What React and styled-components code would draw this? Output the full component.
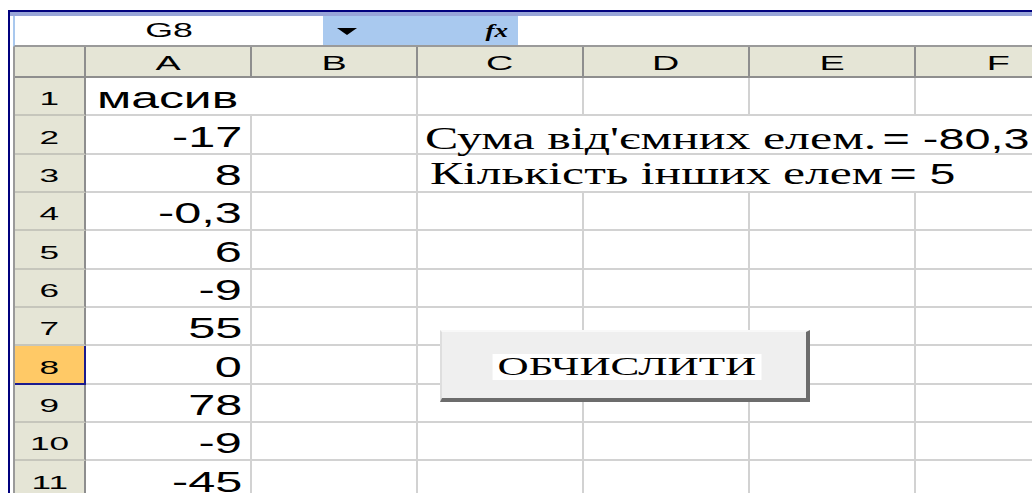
import React from 'react';
import styled, { createGlobalStyle } from 'styled-components';

const GlobalStyle = createGlobalStyle`
  html, body {
    margin: 0;
    padding: 0;
    background: #ffffff;
  }
  body {
    overflow: hidden;
  }
`;

const SANS = '"Liberation Sans", Arial, sans-serif';
const SERIF = '"Liberation Serif", "Times New Roman", serif';

const Page = styled.div`
  width: 1032px;
  height: 493px;
  overflow: hidden;
  box-sizing: border-box;
  padding: 10px 0 0 8px;
  background: #ffffff;
  font-family: ${SANS};
  color: #000000;
`;

const Window = styled.div`
  height: 100%;
  border-top: 2px solid #00007e;
  border-left: 2px solid #00007e;
`;

const TitleEdge = styled.div`
  height: 4px;
  background: #98a5d8;
`;

const Body = styled.div`
  padding-left: 3px;
  background: #ffffff;
`;

/* wide text: the sheet is drawn with a horizontally stretched type */
const Wide = styled.span`
  display: inline-block;
  white-space: nowrap;
  transform: scaleX(${(p) => p.$sx || 1.6});
  transform-origin: ${(p) => p.$origin || 'center'};
`;

const FormulaBar = styled.div`
  display: flex;
  height: 31px;
  box-sizing: border-box;
  border-left: 2px solid #a9c8ee;
  border-bottom: 2px solid #9a9a9a;
`;

const NameBox = styled.div`
  width: 308px;
  box-sizing: border-box;
  display: flex;
  justify-content: center;
  align-items: flex-end;
  padding-bottom: 5px;
  font-size: 21px;
  line-height: 21px;
`;

const FxStrip = styled.div`
  width: 195px;
  box-sizing: border-box;
  display: flex;
  align-items: center;
  justify-content: space-between;
  padding: 2px 10px 0 14px;
  background: #a9c9ef;
`;

const FxMark = styled.span`
  font-family: ${SERIF};
  font-style: italic;
  font-weight: bold;
  font-size: 18px;
  line-height: 18px;
`;

const FormulaInput = styled.div`
  flex: 1;
  background: #ffffff;
`;

const Sheet = styled.div`
  position: relative;
  display: grid;
  grid-template-columns: 71px repeat(6, 166px);
  grid-template-rows: 31px;
  grid-auto-rows: 38.333px;
  border-left: 2px solid #9a9a9a;
`;

const ColHead = styled.div`
  box-sizing: border-box;
  display: flex;
  align-items: flex-end;
  justify-content: center;
  padding-bottom: 3px;
  background: #e5e5d6;
  border-right: 2px solid #8e8e8e;
  border-bottom: 2px solid #8e8e8e;
  font-size: 21px;
  line-height: 21px;
`;

const RowHead = styled.div`
  box-sizing: border-box;
  display: flex;
  align-items: flex-end;
  justify-content: center;
  padding-bottom: 6px;
  background: ${(p) => (p.$active ? '#ffc966' : '#e5e5d6')};
  border-right: 2px solid ${(p) => (p.$active ? '#1b1b8f' : '#8e8e8e')};
  border-bottom: 2px solid ${(p) => (p.$active ? '#1b1b8f' : '#c6c6bc')};
  font-size: 19px;
  line-height: 19px;
`;

const Cell = styled.div`
  grid-column: span ${(p) => p.$span || 1};
  box-sizing: border-box;
  min-width: 0;
  display: flex;
  align-items: flex-end;
  justify-content: ${(p) => (p.$right ? 'flex-end' : 'flex-start')};
  padding: 0 ${(p) => p.$pr || 0}px ${(p) => p.$pb ?? 1}px ${(p) => p.$pl || 0}px;
  border-right: 2px solid #d2d2d2;
  border-bottom: 2px solid #d2d2d2;
  font-size: 30px;
  line-height: ${(p) => p.$lh || 30}px;
`;

const Label = styled.span`
  margin-right: 4px;
  font-family: ${SERIF};
  font-size: 32px;
`;

const Button = styled.button`
  position: absolute;
  left: 425px;
  top: 283px;
  width: 370px;
  height: 72px;
  box-sizing: border-box;
  display: flex;
  align-items: center;
  justify-content: center;
  padding: 4px 0 0 6px;
  margin: 0;
  background: #efefef;
  border-top: 2px solid #f8f8f8;
  border-left: 2px solid #dedede;
  border-right: 4px solid #6c6c6c;
  border-bottom: 4px solid #6c6c6c;
  cursor: default;
`;

const ButtonCaption = styled.span`
  display: inline-block;
  padding: 0 3px;
  background: #ffffff;
  font-family: ${SERIF};
  font-size: 26px;
  line-height: 26px;
  color: #000000;
  transform: scaleX(1.66);
`;

const columns = ['A', 'B', 'C', 'D', 'E', 'F'];
const values = ['-17', '8', '-0,3', '6', '-9', '55', '0', '78', '-9', '-45'];

function DropArrow() {
  return (
    <svg width="20" height="7" viewBox="0 0 20 7">
      <polygon points="0,0 20,0 10,7" fill="#000000" />
    </svg>
  );
}

function EmptyCells({ count }) {
  return Array.from({ length: count }, (_, i) => <Cell key={i} />);
}

export default function App() {
  return (
    <>
      <GlobalStyle />
      <Page>
        <Window>
          <TitleEdge />
          <Body>
            <FormulaBar>
              <NameBox>
                <Wide $sx={1.7}>G8</Wide>
              </NameBox>
              <FxStrip>
                <DropArrow />
                <Wide $sx={1.5} $origin="right">
                  <FxMark>fx</FxMark>
                </Wide>
              </FxStrip>
              <FormulaInput />
            </FormulaBar>

            <Sheet>
              <ColHead />
              {columns.map((c) => (
                <ColHead key={c}>
                  <Wide $sx={1.8}>{c}</Wide>
                </ColHead>
              ))}

              <RowHead>
                <Wide $sx={1.85}>1</Wide>
              </RowHead>
              <Cell $span={2} $pl={11}>
                <Wide $sx={1.66} $origin="left">масив</Wide>
              </Cell>
              <EmptyCells count={4} />

              {values.map((v, i) => {
                const row = i + 2;
                return (
                  <React.Fragment key={row}>
                    <RowHead $active={row === 8}>
                      <Wide $sx={1.85}>{row}</Wide>
                    </RowHead>
                    <Cell $right $pr={8}>
                      <Wide $sx={1.62} $origin="right">{v}</Wide>
                    </Cell>
                    <Cell />
                    {row === 2 && (
                      <Cell $span={4} $pl={7} $lh={28} $pb={0}>
                        <Wide $sx={1.56} $origin="left">
                          <Label>Сума від'ємних елем.</Label>= -80,3
                        </Wide>
                      </Cell>
                    )}
                    {row === 3 && (
                      <Cell $span={4} $pl={12} $lh={28} $pb={3}>
                        <Wide $sx={1.55} $origin="left">
                          <Label>Кількість інших елем</Label>= 5
                        </Wide>
                      </Cell>
                    )}
                    {row > 3 && <EmptyCells count={4} />}
                  </React.Fragment>
                );
              })}

              <Button type="button">
                <ButtonCaption>ОБЧИСЛИТИ</ButtonCaption>
              </Button>
            </Sheet>
          </Body>
        </Window>
      </Page>
    </>
  );
}
